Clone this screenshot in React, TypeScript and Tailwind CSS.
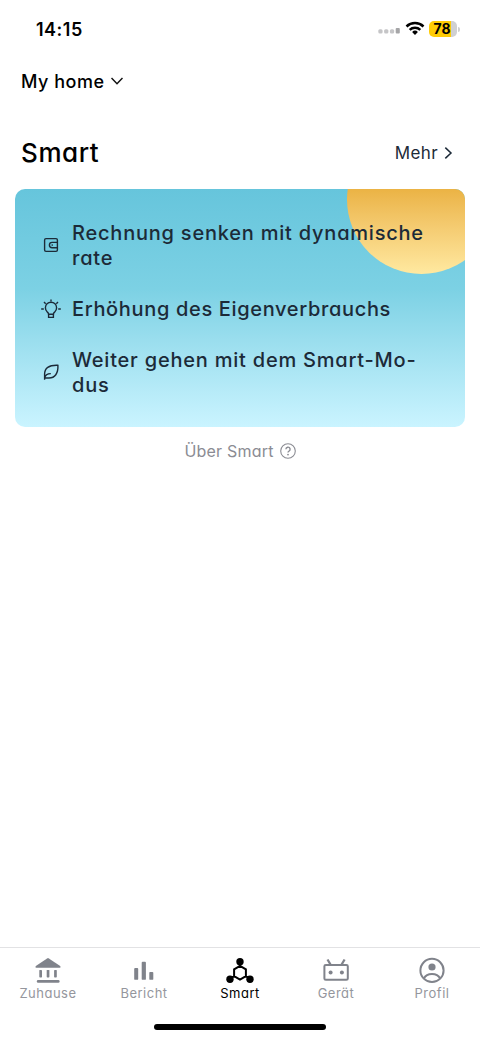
import type { ReactNode } from 'react';

function WalletIcon() {
  return (
    <svg className="shrink-0" width="20" height="20" viewBox="0 0 20 20" fill="none" stroke="#1c2a38" strokeWidth="1.4">
      <rect x="3.6" y="3.6" width="12.8" height="12.8" rx="1.4" />
      <path d="M16.4 7.400h-5.300a2.700 2.700 0 0 0 0 5.400h5.300" />
      <circle cx="11.200" cy="10.100" r=".8" fill="#1c2a38" stroke="none" />
    </svg>
  );
}

function BulbIcon() {
  return (
    <svg className="shrink-0" width="20" height="20" viewBox="0 0 20 20" fill="none" stroke="#1c2a38" strokeWidth="1.4">
      <path d="M7.600 15.300c0-1.400-.6-1.700-1.500-2.500a5.600 5.600 0 1 1 7.800 0c-.9.800-1.500 1.100-1.500 2.500z" />
      <path d="M7.600 15.300v3.100h4.800v-3.100M10 .4v2M.2 10h2.600M17.200 10h2.600M3 3.100l1.700 1.700M17 3.100l-1.700 1.700" />
    </svg>
  );
}

function LeafIcon() {
  return (
    <svg className="shrink-0" width="20" height="20" viewBox="0 0 20 20" fill="none" stroke="#1c2a38" strokeWidth="1.4">
      <path d="M3.600 17.800v-5.800C3.700 6.300 7.500 2.900 16.900 3.300C17.400 11.500 13.800 16 8 16H3.600M3.600 16C4.200 12.900 6.200 11.600 9.800 11.600" />
    </svg>
  );
}

function HomeIcon() {
  return (
    <svg width="28" height="28" viewBox="0 0 28 28" fill="#80838b">
      <path d="M13.100 1.400q.9-.6 1.800 0l10.900 7.400q1.700 1.500-.1 1.900h-23.400q-1.800-.4-.1-1.900z" />
      <rect x="5.300" y="12.900" width="2.700" height="7.600" rx=".7" />
      <rect x="12.700" y="12.900" width="2.700" height="7.600" rx=".7" />
      <rect x="20.100" y="12.900" width="2.700" height="7.600" rx=".7" />
      <rect x="2.800" y="23" width="22.800" height="2.700" rx="1.300" />
    </svg>
  );
}

function ReportIcon() {
  return (
    <svg width="28" height="28" viewBox="0 0 28 28" fill="#80838b">
      <rect x="4.200" y="11" width="4" height="11.800" rx=".9" />
      <rect x="11.700" y="4.800" width="4.200" height="18" rx=".9" />
      <rect x="19.300" y="14.900" width="4" height="7.900" rx=".9" />
    </svg>
  );
}

function SmartIcon() {
  return (
    <svg width="28" height="28" viewBox="0 0 28 28" fill="none" stroke="#000" strokeWidth="2">
      <path d="M14 8.900l5.900 3.400v6.800L14 22.500l-5.900-3.400v-6.800zM14 5v4M8.100 19.100L4 21.500M19.900 19.100l4.100 2.400" />
      <g fill="#000" stroke="none">
        <circle cx="14" cy="4.800" r="3.700" />
        <circle cx="4" cy="22.300" r="3.700" />
        <circle cx="24" cy="22.300" r="3.700" />
      </g>
    </svg>
  );
}

function DeviceIcon() {
  return (
    <svg width="28" height="28" viewBox="0 0 28 28" fill="none" stroke="#80838b" strokeWidth="2">
      <rect x="2.400" y="7.900" width="23.400" height="14.900" rx="1.400" />
      <path d="M5.500 2.500l3 5M22.600 2.500l-3 5" strokeWidth="2.300" />
      <circle cx="8.600" cy="15.400" r="2" fill="#80838b" stroke="none" />
      <circle cx="19.900" cy="15.400" r="2" fill="#80838b" stroke="none" />
    </svg>
  );
}

function ProfileIcon() {
  return (
    <svg width="28" height="28" viewBox="0 0 28 28" fill="none" stroke="#80838b" strokeWidth="2">
      <circle cx="14" cy="13.400" r="11.600" />
      <circle cx="14" cy="10" r="3.600" fill="#80838b" stroke="none" />
      <path d="M5.900 21.500c1.600-3.200 4.400-4.500 8.100-4.500s6.500 1.300 8.100 4.500" />
    </svg>
  );
}

function StatusBar() {
  return (
    <div className="flex h-[58px] items-center justify-between pr-5 pl-9">
      <span className="pt-px text-lg font-semibold tracking-[0.5px] text-black">14:15</span>
      <div className="flex items-center">
        <svg className="mt-1" width="22" height="8" viewBox="0 0 22 8" fill="#c5c5c7">
          <rect x=".3" y="2.200" width="4.300" height="4.300" rx="1.500" />
          <rect x="6.100" y="2.200" width="4.300" height="4.300" rx="1.500" />
          <rect x="11.900" y="2.200" width="4.300" height="4.300" rx="1.500" />
          <rect x="17.700" y="1" width="4.100" height="5.500" rx="1" fill="#a5a5a7" />
        </svg>
        <svg className="ml-[5px]" width="20" height="16" viewBox="0 0 20 16" fill="none" stroke="#000" strokeWidth="2.500">
          <path d="M1.500 5.500a12.300 12.300 0 0 1 17 0M4.700 8.800a7.700 7.700 0 0 1 10.600 0" />
          <path d="M10 14l-2.900-3a4.200 4.200 0 0 1 5.800 0z" fill="#000" stroke="none" />
        </svg>
        <div className="ml-1 flex h-4 w-[28px] items-center justify-center rounded-[5px] bg-linear-to-r from-[#ffcc05] from-78% to-[#d0d0d2] to-78%">
          <span className="pr-0.5 text-sm font-bold text-black">78</span>
        </div>
        <div className="ml-px h-[5px] w-[2px] rounded-r-full bg-[#cfcfcf]" />
      </div>
    </div>
  );
}

function Feature({ icon, children }: { icon: ReactNode; children: ReactNode }) {
  return (
    <li className="flex items-center gap-[11px]">
      {icon}
      <span className="pt-0.5 text-xl leading-[25px] font-medium tracking-[0.78px] whitespace-nowrap text-[#1c2a38]">{children}</span>
    </li>
  );
}

function Tab({ icon, label, active = false }: { icon: ReactNode; label: string; active?: boolean }) {
  return (
    <button className="flex w-24 flex-col items-center">
      {icon}
      <span className={active ? 'text-[13px] leading-4 tracking-[0.5px] text-black' : 'text-[13px] leading-4 tracking-[0.5px] text-[#94969d]'}>
        {label}
      </span>
    </button>
  );
}

export default function App() {
  return (
    <div className="flex h-[1039px] w-[480px] flex-col overflow-hidden bg-white font-['Inter',sans-serif] [font-feature-settings:'cv11']">
      <StatusBar />
      <button className="flex h-[46px] items-center gap-[7px] pl-[21px]">
        <span className="pt-0.5 text-lg font-medium tracking-[0.5px] text-black">My home</span>
        <svg width="12" height="8" viewBox="0 0 12 8" fill="none" stroke="#111" strokeWidth="1.500">
          <path d="M.5 1L6 6.700 11.500 1" />
        </svg>
      </button>
      <main className="flex flex-1 flex-col px-[15px] pt-[29px]">
        <header className="flex h-10 items-center justify-between pr-3 pl-1.5">
          <h1 className="pb-0.5 text-[26px] font-medium tracking-[0.6px] text-black">Smart</h1>
          <a className="flex items-center gap-1.5 text-[#1c2a38]">
            <span className="pt-0.5 text-[17px] tracking-[0.4px]">Mehr</span>
            <svg width="9" height="12" viewBox="0 0 9 12" fill="none" stroke="currentColor" strokeWidth="1.500">
              <path d="M1.300 .6L7 6 1.300 11.400" />
            </svg>
          </a>
        </header>
        <section className="relative mt-4 h-[238px] overflow-hidden rounded-[10px] bg-linear-to-b from-[#66c5dc] via-[#7cd1e4] via-42% to-[#caf4ff]">
          <div className="absolute -top-[64px] left-[332px] size-[149px] rounded-full bg-linear-to-b from-[#ebb344] from-43% to-[#ffe9a0]" />
          <ul className="relative flex flex-col gap-6 pt-[30px] pl-[26px]">
            <Feature icon={<WalletIcon />}>Rechnung senken mit dynamische<br />rate</Feature>
            <Feature icon={<BulbIcon />}><span className="tracking-[0.66px]">Erhöhung des Eigenverbrauchs</span></Feature>
            <Feature icon={<LeafIcon />}>Weiter gehen mit dem Smart-Mo-<br />dus</Feature>
          </ul>
        </section>
        <button className="mt-3 flex items-center justify-center gap-1.5 text-[#8b8c93]">
          <span className="text-base tracking-[0.2px]">Über Smart</span>
          <svg width="16" height="16" viewBox="0 0 16 16" fill="none" stroke="currentColor" strokeWidth="1.100">
            <circle cx="8" cy="8" r="7.300" />
            <path d="M5.900 6.300a2.100 2.100 0 1 1 3.100 1.800q-1 .5-1 1.500" strokeWidth="1.400" />
            <circle cx="8" cy="11.600" r=".9" fill="currentColor" stroke="none" />
          </svg>
        </button>
      </main>
      <nav className="flex h-[92px] flex-col items-center border-t border-[#e2e2e4] pt-[9px]">
        <div className="flex">
          <Tab icon={<HomeIcon />} label="Zuhause" />
          <Tab icon={<ReportIcon />} label="Bericht" />
          <Tab icon={<SmartIcon />} label="Smart" active />
          <Tab icon={<DeviceIcon />} label="Gerät" />
          <Tab icon={<ProfileIcon />} label="Profil" />
        </div>
        <div className="mt-[23px] h-[6px] w-[172px] rounded-full bg-black" />
      </nav>
    </div>
  );
}
